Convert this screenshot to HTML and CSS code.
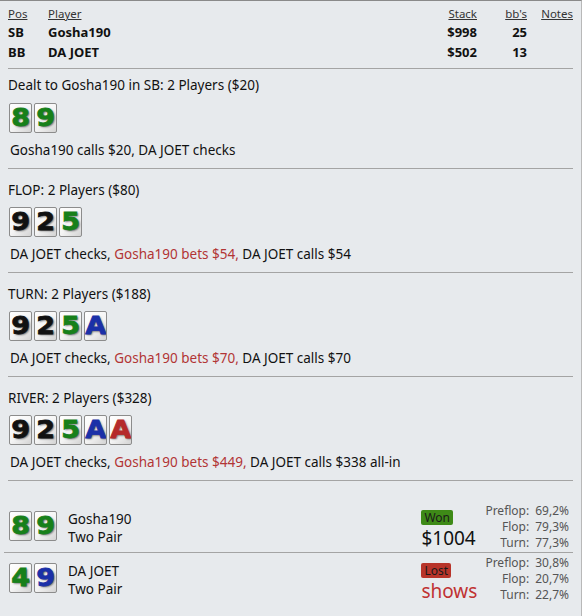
FILE: index.html
```html
<!DOCTYPE html>
<html>
<head>
<meta charset="utf-8">
<link rel="stylesheet" href="styles.css">
</head>
<body>
<div class="page">
  <div class="players">
    <div class="prow head">
      <span class="pos u">Pos</span><span class="name u">Player</span><span class="stack u">Stack</span><span class="bbs u">bb's</span><span class="notes u">Notes</span>
    </div>
    <div class="prow bold">
      <span class="pos">SB</span><span class="name">Gosha190</span><span class="stack">$998</span><span class="bbs">25</span><span class="notes"></span>
    </div>
    <div class="prow bold">
      <span class="pos">BB</span><span class="name">DA JOET</span><span class="stack">$502</span><span class="bbs">13</span><span class="notes"></span>
    </div>
  </div>

  <div class="street first">
    <div class="title">Dealt to Gosha190 in SB: 2 Players ($20)</div>
    <div class="cards"><span class="card c"><b>8</b></span><span class="card c"><b>9</b></span></div>
    <div class="action">Gosha190 calls $20, DA JOET checks</div>
  </div>

  <div class="street">
    <div class="title">FLOP: 2 Players ($80)</div>
    <div class="cards"><span class="card s"><b>9</b></span><span class="card s"><b>2</b></span><span class="card c"><b>5</b></span></div>
    <div class="action">DA JOET checks, <span class="hero">Gosha190 bets $54,</span> DA JOET calls $54</div>
  </div>

  <div class="street">
    <div class="title">TURN: 2 Players ($188)</div>
    <div class="cards"><span class="card s"><b>9</b></span><span class="card s"><b>2</b></span><span class="card c"><b>5</b></span><span class="card d"><b>A</b></span></div>
    <div class="action">DA JOET checks, <span class="hero">Gosha190 bets $70,</span> DA JOET calls $70</div>
  </div>

  <div class="street">
    <div class="title">RIVER: 2 Players ($328)</div>
    <div class="cards"><span class="card s"><b>9</b></span><span class="card s"><b>2</b></span><span class="card c"><b>5</b></span><span class="card d"><b>A</b></span><span class="card h"><b>A</b></span></div>
    <div class="action">DA JOET checks, <span class="hero">Gosha190 bets $449,</span> DA JOET calls $338 all-in</div>
  </div>

  <div class="showdown">
    <div class="srow">
      <div class="cards"><span class="card c"><b>8</b></span><span class="card c"><b>9</b></span></div>
      <div class="who"><div>Gosha190</div><div>Two Pair</div></div>
      <div class="result"><span class="badge won">Won</span><div class="amount">$1004</div></div>
      <div class="stats">
        <span class="lbl">Preflop:</span><span class="val">69,2%</span>
        <span class="lbl">Flop:</span><span class="val">79,3%</span>
        <span class="lbl">Turn:</span><span class="val">77,3%</span>
      </div>
    </div>
    <div class="srow">
      <div class="cards"><span class="card c"><b>4</b></span><span class="card d"><b>9</b></span></div>
      <div class="who"><div>DA JOET</div><div>Two Pair</div></div>
      <div class="result"><span class="badge lost">Lost</span><div class="amount red">shows</div></div>
      <div class="stats">
        <span class="lbl">Preflop:</span><span class="val">30,8%</span>
        <span class="lbl">Flop:</span><span class="val">20,7%</span>
        <span class="lbl">Turn:</span><span class="val">22,7%</span>
      </div>
    </div>
  </div>
</div>
</body>
</html>
```

FILE: styles.css
```css
html, body {
  margin: 0;
  padding: 0;
}
body {
  background: #e7eaed;
  font-family: "Noto Sans", "Open Sans", sans-serif;
  font-size: 13.5px;
  color: #111;
}
.page {
  width: 581px;
  height: 615px;
  border-top: 1px solid #8a8a8a;
  border-right: 1px solid #b8b8b8;
  overflow: hidden;
}
.players {
  margin: 0 8px;
  padding: 5px 0 6px;
  border-bottom: 1px solid #a4a4a4;
}
.prow {
  display: grid;
  grid-template-columns: 40px 1fr 60px 50px 46px;
  align-items: center;
}
.prow.head {
  font-size: 11.5px;
  color: #333;
  height: 16px;
  line-height: 16px;
}
.prow.bold {
  font-weight: bold;
  font-size: 13px;
  height: 20px;
  line-height: 20px;
}
.u { text-decoration: underline; }
.stack, .bbs { text-align: right; }
.notes { text-align: right; }
.street {
  margin: 0 8px;
  padding: 12px 0 9px;
  border-bottom: 1px solid #a4a4a4;
}
.street.first { padding-top: 7px; }
.street.first .cards { margin-top: 9px; }
.title {
  line-height: 18px;
}
.cards {
  display: flex;
  gap: 2px;
  margin-top: 8px;
  margin-left: 1px;
}
.street .cards { height: 30px; }
.card {
  display: flex;
  align-items: center;
  justify-content: center;
  width: 21px;
  height: 28px;
  border: 1px solid #8c8c8c;
  border-radius: 2px;
  background: linear-gradient(135deg, #ffffff 0%, #f4f4f4 55%, #d3d3d3 100%);
  overflow: hidden;
}
.card b {
  display: block;
  font-family: "DejaVu Sans", sans-serif;
  font-weight: bold;
  font-size: 25px;
  line-height: 28px;
  transform: scaleX(1.08);
  text-shadow: 1px 1px 2px rgba(0,0,0,0.6);
  -webkit-text-stroke: 0.8px currentColor;
}
.card.c { color: #17801a; }
.card.s { color: #111; }
.card.d { color: #1b30a8; }
.card.h { color: #b52a2a; }
.action {
  margin-top: 8px;
  margin-left: 2px;
  line-height: 18px;
}
.hero { color: #b23535; }
.showdown {
  margin: 0 8px 0 4px;
  padding-top: 22px;
}
.srow {
  display: flex;
  align-items: flex-start;
  padding: 0 0 1px;
  border-bottom: 1px solid #a4a4a4;
}
.srow:last-child { border-bottom: none; padding-top: 2px; }
.srow .cards { margin: 8px 0 0 5px; height: 30px; }
.who {
  margin-left: 11px;
  margin-top: 7px;
  line-height: 18px;
  flex: 1;
}
.result {
  width: 64px;
  margin-top: 5px;
}
.srow:last-child .result { margin-top: 6px; }
.badge {
  display: inline-block;
  font-size: 12px;
  line-height: 15px;
  padding: 0 3px;
  border-radius: 2px;
  color: #1a1a1a;
}
.badge.won { background: #3e8a17; }
.badge.lost { background: #b8342a; }
.amount {
  font-size: 19px;
  line-height: 24px;
}
.amount.red { color: #c03232; }
.stats {
  display: grid;
  grid-template-columns: auto auto;
  column-gap: 6px;
  font-size: 12px;
  line-height: 16px;
  color: #555;
  margin-right: 4px;
}
.lbl { text-align: right; }
```
